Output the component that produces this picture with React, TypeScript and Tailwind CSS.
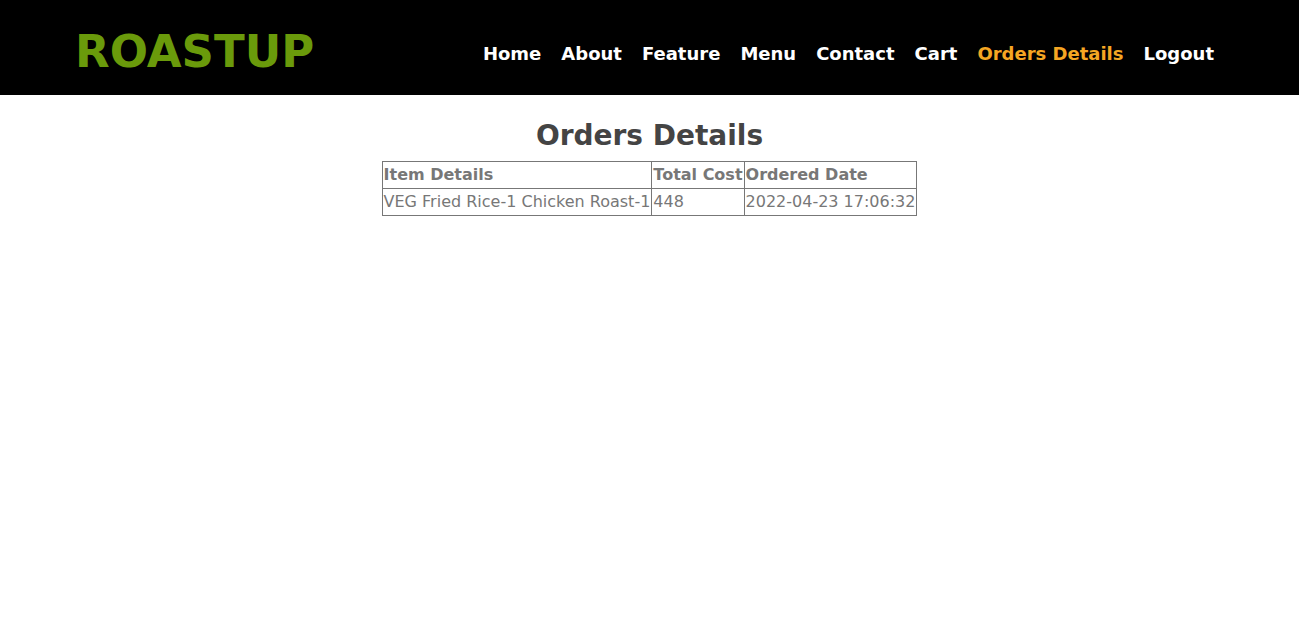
const links = ["Home", "About", "Feature", "Menu", "Contact", "Cart", "Orders Details", "Logout"]

export default function App() {
  return (
    <div className="min-h-screen bg-white font-['DejaVu_Sans',sans-serif]">
      {/* Header */}
      <header className="flex h-[95px] items-center justify-between bg-black pl-[75px] pr-[85px]">
        <h1 className="mt-[8px] text-[45px] font-bold leading-none text-[#6a9a0b]">ROASTUP</h1>
        <nav className="mt-[12px] flex items-center gap-[20px]">
          {links.map((l) => (
            <a
              key={l}
              href="#"
              className={`text-[18px] font-bold ${l === "Orders Details" ? "text-[#f5a623]" : "text-white"}`}
            >
              {l}
            </a>
          ))}
        </nav>
      </header>

      {/* Orders */}
      <main className="flex flex-col items-center pt-[21px]">
        <h2 className="text-[28px] font-bold leading-[40px] text-[#444]">Orders Details</h2>
        <table className="mt-[5px] border-collapse border border-[#777] text-[16px] text-[#777]">
          <thead>
            <tr>
              <th className="border border-[#777] p-[1px] text-left font-bold">Item Details</th>
              <th className="border border-[#777] p-[1px] text-left font-bold">Total Cost</th>
              <th className="border border-[#777] p-[1px] text-left font-bold">Ordered Date</th>
            </tr>
          </thead>
          <tbody>
            <tr>
              <td className="border border-[#777] p-[1px]">VEG Fried Rice-1 Chicken Roast-1</td>
              <td className="border border-[#777] p-[1px]">448</td>
              <td className="border border-[#777] p-[1px]">2022-04-23 17:06:32</td>
            </tr>
          </tbody>
        </table>
      </main>
    </div>
  )
}
